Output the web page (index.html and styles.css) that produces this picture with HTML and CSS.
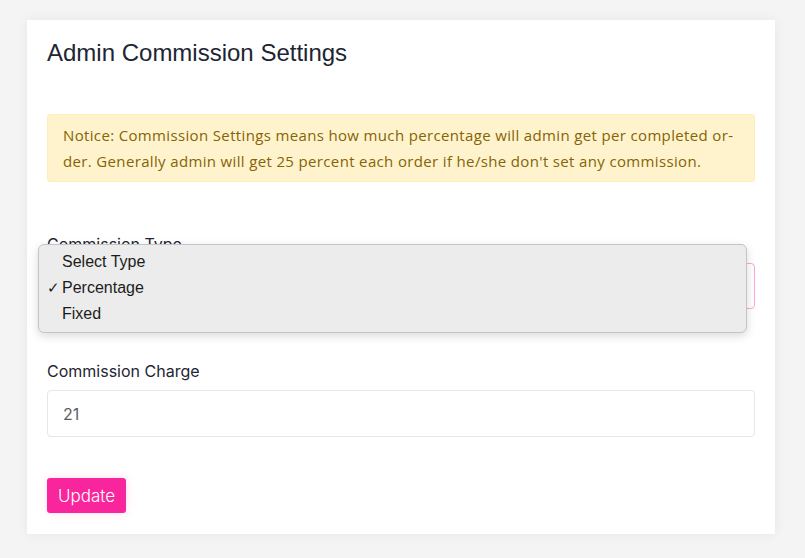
FILE: index.html
```html
<!DOCTYPE html>
<html lang="en">
<head>
  <meta charset="UTF-8">
  <meta name="viewport" content="width=device-width, initial-scale=1.0">
  <title>Admin Commission Settings</title>
  <link rel="stylesheet" href="styles.css">
</head>
<body>
  <main class="card">
    <h2 class="title">Admin Commission Settings</h2>
    <div class="notice">
      Notice: Commission Settings means how much percentage will admin get per completed or-<br>der. Generally admin will get 25 percent each order if he/she don't set any commission.
    </div>
    <form class="settings">
      <div class="field">
        <label for="type">Commission Type</label>
        <div class="select-wrap">
          <div class="select" id="type"></div>
          <ul class="options">
            <li>Select Type</li>
            <li class="picked">Percentage</li>
            <li>Fixed</li>
          </ul>
        </div>
      </div>
      <div class="field">
        <label for="charge">Commission Charge</label>
        <input type="text" id="charge" value="21">
      </div>
      <button type="submit" class="btn">Update</button>
    </form>
  </main>
</body>
</html>
```

FILE: styles.css
```css
* {
  padding: 0;
  margin: 0;
  box-sizing: border-box;
}
body {
  background-color: #f4f4f4;
  padding: 20px 30px 24px 27px;
  font-family: Inter, "Liberation Sans", sans-serif;
  color: #1f2533;
}
.card {
  background-color: #fff;
  padding: 20px 20px 21px;
  box-shadow: 0 0 12px rgba(0, 0, 0, 0.06);
}
.title {
  font-family: "Liberation Sans", Arial, sans-serif;
  font-weight: 400;
  font-size: 24px;
  line-height: 26px;
  color: #1e2532;
}
.notice {
  margin-top: 48px;
  background-color: #fff3cd;
  border: 1px solid #ffeeba;
  border-radius: 3px;
  color: #856404;
  padding: 7px 15px;
  font-family: "Open Sans", Lato, sans-serif;
  font-size: 15px;
  letter-spacing: 0.35px;
  line-height: 26px;
  white-space: nowrap;
}
.settings {
  margin-top: 52px;
}
.field {
  margin-bottom: 52px;
}
.field label {
  display: block;
  font-size: 16px;
  line-height: 20px;
  margin-bottom: 9px;
  color: #1f2533;
}
.select-wrap {
  position: relative;
}
.select {
  height: 46px;
  border: 1px solid #f8a8da;
  border-radius: 4px;
}
.options {
  position: absolute;
  left: -9px;
  top: -19px;
  width: 709px;
  height: 89px;
  list-style: none;
  background-color: #ebeceb;
  border: 1px solid #c4c4c4;
  border-radius: 6px;
  box-shadow: 0 3px 10px rgba(0, 0, 0, 0.15);
  padding: 4px 0 0 23px;
  font-family: "Liberation Sans", Arial, sans-serif;
  font-size: 16px;
  line-height: 26px;
  color: #1c1c1c;
}
.options .picked {
  position: relative;
}
.options .picked::before {
  content: "\2713";
  position: absolute;
  left: -15px;
  font-size: 15px;
}
.settings input {
  display: block;
  width: 100%;
  height: 47px;
  border: 1px solid #e6e6e6;
  border-radius: 4px;
  padding: 0 15px;
  font-family: Inter, sans-serif;
  font-size: 16px;
  color: #5a5e66;
  outline: none;
}
.settings .field:last-of-type {
  margin-bottom: 41px;
}
.btn {
  display: block;
  height: 35px;
  padding: 0 11px;
  background-color: #f8259c;
  border: none;
  border-radius: 3px;
  color: #fff;
  font-family: Inter, sans-serif;
  font-size: 17px;
  font-weight: 300;
  box-shadow: 0 0 10px rgba(248, 37, 156, 0.15);
}
```
